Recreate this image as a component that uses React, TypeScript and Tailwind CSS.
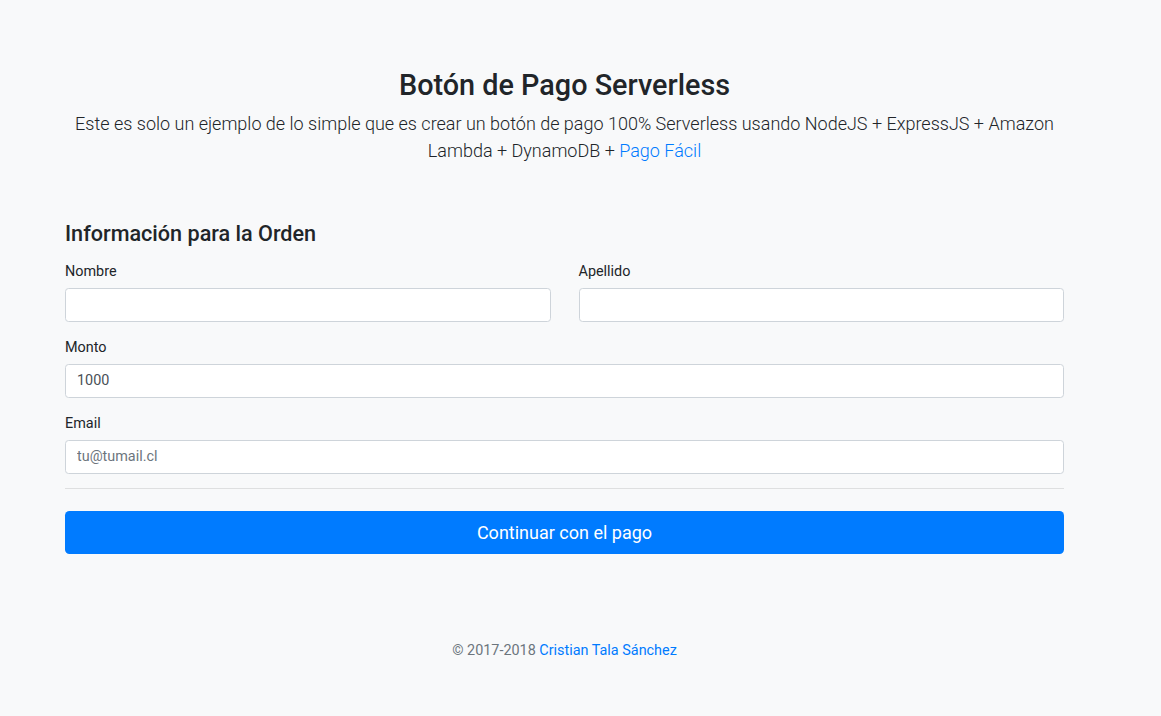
export default function App() {
  const inputCls =
    "block w-full h-[34px] px-[11px] bg-white border border-[#ced4da] rounded-[3.6px] text-[14.4px] text-[#495057] placeholder:text-[#6c757d] outline-none";
  const labelCls = "block text-[14.4px] leading-[21.6px] mb-[5px] text-[#212529]";

  return (
    <div
      className="min-h-screen bg-[#f8f9fa] text-[#212529]"
      style={{ fontFamily: "Roboto, 'Liberation Sans', sans-serif" }}
    >
      <div className="pl-[65px] pt-[68px]">
        <div className="w-[999px]">
          <div className="text-center">
            <h2 className="text-[28.8px] leading-[1.2] font-medium mb-[7.2px]">
              Botón de Pago Serverless
            </h2>
            <p className="text-[18px] leading-[27px] font-light">
              Este es solo un ejemplo de lo simple que es crear un botón de pago 100% Serverless usando NodeJS +
              ExpressJS + Amazon Lambda + DynamoDB + <a href="#" className="text-[#007bff]">Pago Fácil</a>
            </p>
          </div>

          <h4 className="mt-[57px] text-[21.6px] leading-[1.2] font-medium mb-[14.4px]">
            Información para la Orden
          </h4>

          <form>
            <div className="grid grid-cols-2 gap-x-[28px]">
              <div className="mb-[15.4px]">
                <label className={labelCls}>Nombre</label>
                <input type="text" className={inputCls} />
              </div>
              <div className="mb-[15.4px]">
                <label className={labelCls}>Apellido</label>
                <input type="text" className={inputCls} />
              </div>
            </div>

            <div className="mb-[15.4px]">
              <label className={labelCls}>Monto</label>
              <input type="text" className={inputCls} defaultValue="1000" />
            </div>

            <div className="mb-[14.8px]">
              <label className={labelCls}>Email</label>
              <input type="email" className={inputCls} placeholder="tu@tumail.cl" />
            </div>

            <hr className="border-0 border-t border-[rgba(0,0,0,0.1)] mb-[21.6px]" />

            <button
              type="button"
              className="block w-full h-[43px] bg-[#007bff] text-white text-[18px] rounded-[4.5px]"
            >
              Continuar con el pago
            </button>
          </form>

          <footer className="mt-[43.2px] pt-[43.2px] text-center text-[14.4px] leading-[21.6px] text-[#6c757d]">
            © 2017-2018 <a href="#" className="text-[#007bff]">Cristian Tala Sánchez</a>
          </footer>
        </div>
      </div>
    </div>
  );
}
